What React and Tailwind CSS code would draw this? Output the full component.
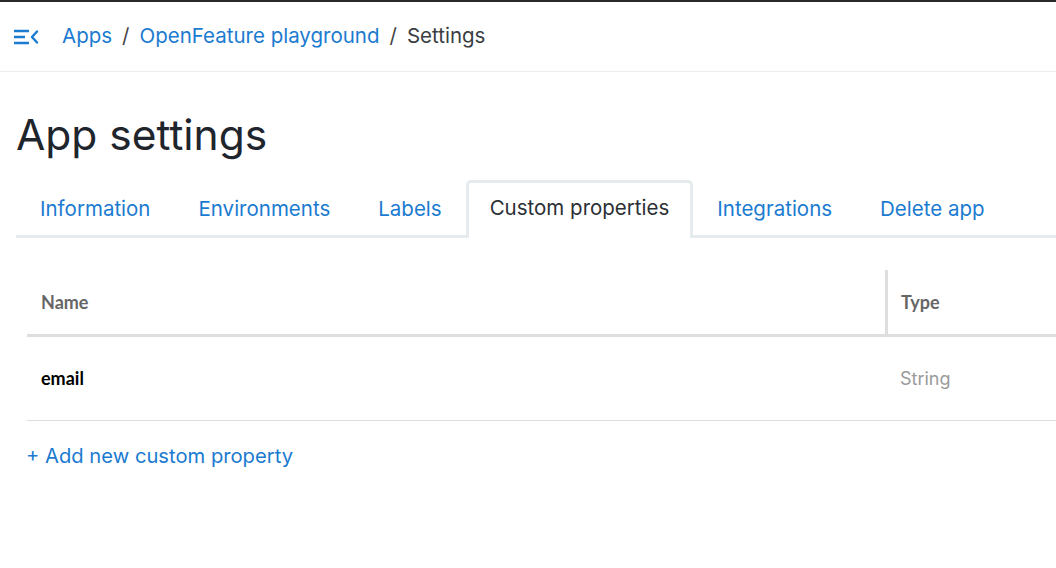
const tabs = [
  { key: "info", label: "Information" },
  { key: "envs", label: "Environments" },
  { key: "labels", label: "Labels" },
  { key: "custom", label: "Custom properties" },
  { key: "integrations", label: "Integrations" },
  { key: "delete", label: "Delete app" },
];

const SidebarToggle = () => (
  <svg width="26" height="18" viewBox="0 0 26 18" fill="none" stroke="#1b7bd0" strokeWidth="2.4">
    <path d="M0 3h15M0 9h11M0 15h15" />
    <path d="M23 3.5 18 9l5 5.5" strokeLinecap="round" strokeLinejoin="round" />
  </svg>
);

export default function App() {
  const active = "custom";

  return (
    <div className="w-[1056px] h-[568px] overflow-hidden bg-white font-['Inter',sans-serif] border-t-2 border-[#2a2a2a]">
      {/* Breadcrumb header */}
      <div className="h-[70px] flex items-center border-b border-[#ececec] pl-[14px]">
        <SidebarToggle />
        <nav className="ml-[22px] -mt-[1px] flex items-center gap-[10px] text-[20.5px] leading-none">
          <span className="text-[#1b7bd0]">Apps</span>
          <span className="text-[#444]">/</span>
          <span className="text-[#1b7bd0]">OpenFeature playground</span>
          <span className="text-[#444]">/</span>
          <span className="text-[#3a3d42]">Settings</span>
        </nav>
      </div>

      <div className="pl-4">
        <h1 className="mt-[39px] text-[42.5px] leading-[48px] text-[#1f252c] font-normal">App settings</h1>

        {/* Tabs */}
        <div className="mt-[21px] flex items-end border-b-[3px] border-[#e6ebee]">
          {tabs.map((tab) => (
            <div
              key={tab.key}
              className={
                tab.key === active
                  ? "-mb-[3px] h-[58px] pb-[5px] px-[21px] flex items-center text-[20.5px] text-[#2b2f35] bg-white border-[3px] border-b-0 border-[#e6ebee] rounded-t-[5px]"
                  : "h-[55px] pt-[3px] px-6 flex items-center text-[20.5px] text-[#1b7bd0]"
              }
            >
              {tab.label}
            </div>
          ))}
        </div>

        {/* Custom properties table */}
        <div className="mt-[32px] ml-[11px] w-[1100px] text-[18px]">
          <div className="flex h-[67px] border-b-[3px] border-[#dedede] font-['Lato',sans-serif] font-bold text-[#666]">
            <div className="w-[858px] flex items-center pl-[14px]">Name</div>
            <div className="border-l-[3px] border-[#dedede] flex items-center pl-[13px]">Type</div>
          </div>
          <div className="flex h-[84px] border-b border-[#dedede] items-center">
            <div className="w-[858px] pl-[14px] font-['Lato',sans-serif] font-bold text-black">email</div>
            <div className="pl-[15px] text-[#9a9a9a]">String</div>
          </div>
          <button className="mt-[22px] -ml-[1px] text-[20.2px] text-[#1b7bd0] leading-[26px]">+ Add new custom property</button>
        </div>
      </div>
    </div>
  );
}
